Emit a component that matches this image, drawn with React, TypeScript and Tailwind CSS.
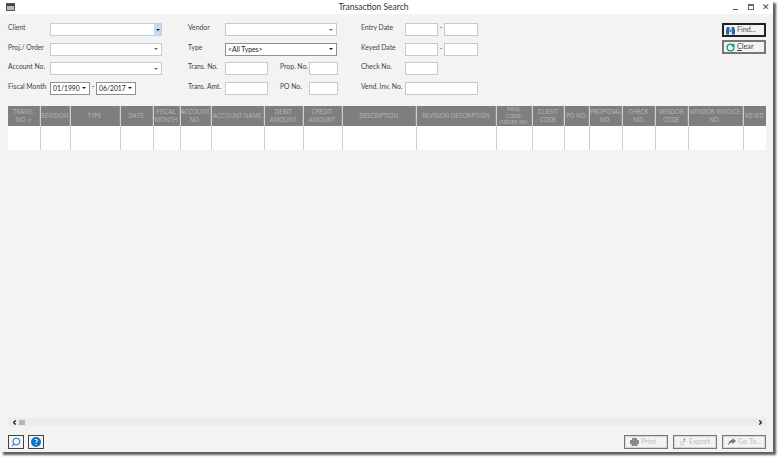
import { ChevronLeft, ChevronRight, RotateCw, Search } from "lucide-react";

const columns = [
  { label: "TRANS. NO. »", width: "w-[33px]" },
  { label: "REVISION", width: "w-[29.5px]" },
  { label: "TYPE", width: "w-[50px]" },
  { label: "DATE", width: "w-[33px]" },
  { label: "FISCAL MONTH", width: "w-[27px]" },
  { label: "ACCOUNT NO.", width: "w-[31px]" },
  { label: "ACCOUNT NAME", width: "w-[53.5px]" },
  { label: "DEBIT AMOUNT", width: "w-[38.5px]" },
  { label: "CREDIT AMOUNT", width: "w-[39px]" },
  { label: "DESCRIPTION", width: "w-[74.5px]" },
  { label: "REVISION DESCRIPTION", width: "w-[80px]" },
  { label: "PROJ.\nCODE/\nORDER NO.", width: "w-[36px]", tight: true },
  { label: "CLIENT CODE", width: "w-[32px]" },
  { label: "PO NO.", width: "w-[25px]" },
  { label: "PROPOSAL NO.", width: "w-[33px]" },
  { label: "CHECK NO.", width: "w-[33px]" },
  { label: "VENDOR CODE", width: "w-[32.5px]" },
  { label: "VENDOR INVOICE NO.", width: "w-[55px]" },
  { label: "KEYED", width: "w-[23px]" },
];

function Label({ children, className = "" }: { children: string; className?: string }) {
  return <span className={`shrink-0 whitespace-nowrap text-[6.8px] leading-[9px] text-[#444] ${className}`}>{children}</span>;
}

function Input({ className = "" }: { className?: string }) {
  return <div className={`h-[13px] shrink-0 border border-[#c9c9c9] bg-white ${className}`} />;
}

function Select({ value, className = "", dark = false }: { value?: string; className?: string; dark?: boolean }) {
  return (
    <div className={`flex h-[13px] shrink-0 items-center justify-between border bg-white pl-[2px] pr-[3px] ${dark ? "border-[#8f8f8f]" : "border-[#c9c9c9]"} ${className}`}>
      <span className="whitespace-nowrap text-[6.8px] leading-[10px] text-[#222]">{value}</span>
      <span className={`h-0 w-0 border-x-[2px] border-t-[2px] border-x-transparent ${dark ? "border-t-[#101060]" : "border-t-[#666]"}`} />
    </div>
  );
}

function Binoculars() {
  return (
    <svg width="9" height="9" viewBox="0 0 9 9" className="shrink-0">
      <path d="M1 1h2.500v2h-.3v5.500H0V4z M5.500 1H8l1 3v4.500H5.800V3h-.3z M3.800 3.500h1.400v2.500H3.800z" fill="#2c64a8" />
    </svg>
  );
}

function ToolButton({ children, className = "" }: { children: React.ReactNode; className?: string }) {
  return (
    <div className={`flex h-[14px] w-[44px] shrink-0 items-center gap-[2px] border-2 pl-[2px] text-[7.2px] leading-none ${className}`}>
      {children}
    </div>
  );
}

function DisabledButton({ label, icon }: { label: string; icon: React.ReactNode }) {
  return (
    <div className="flex h-[14px] w-[44px] items-center gap-[2px] border border-[#777] pl-[5px] text-[7.2px] leading-none text-[#bdbdbd] shadow-[inset_0_0_0_1px_#d5d5d5]">
      {icon}
      <span>{label}</span>
    </div>
  );
}

export default function App() {
  return (
    <div className="h-[459px] w-[781px] overflow-hidden bg-white font-['Lato',sans-serif]">
      <div className="flex h-[452px] w-[773px] flex-col bg-[#f3f3f3] shadow-[3px_3px_2px_#5f5f5f]">
        <div className="relative flex h-[14px] shrink-0 items-center justify-center bg-white pr-[26px]">
          <div className="absolute left-[6px] top-[3px] h-[8px] w-[9px] border border-[#555] bg-[#bbb] shadow-[inset_0_2px_0_#444]" />
          <span className="text-[8.5px] leading-none text-[#333]">Transaction Search</span>
          <span className="absolute left-[733px] top-[9px] h-px w-[5px] bg-[#555]" />
          <span className="absolute left-[748px] top-[4px] h-[6px] w-[6px] border border-[#666] border-t-2" />
          <span className="absolute left-[762px] top-[1px] text-[9px] leading-[12px] text-[#444]">✕</span>
        </div>

        <div className="flex h-[92px] shrink-0 pl-[8px] pr-[7px] pt-[9px]">
          <div className="flex w-[180px] shrink-0 flex-col gap-[6.67px]">
            <div className="flex h-[13px] items-start">
              <Label className="w-[42px]">Client</Label>
              <div className="flex h-[13px] w-[112px] items-center justify-between border border-[#bcd0e6] bg-white">
                <span />
                <span className="flex h-full w-[7px] items-center justify-center bg-[#c5d9f0]">
                  <span className="h-0 w-0 border-x-[2px] border-t-[2px] border-x-transparent border-t-[#224]" />
                </span>
              </div>
            </div>
            <div className="flex h-[13px] items-start">
              <Label className="w-[42px]">Proj./ Order</Label>
              <Select className="w-[112px]" />
            </div>
            <div className="flex h-[13px] items-start">
              <Label className="w-[42px]">Account No.</Label>
              <Select className="w-[112px]" />
            </div>
            <div className="flex h-[13px] items-start">
              <Label className="w-[42px]">Fiscal Month</Label>
              <Select dark value="01/1990" className="w-[40px]" />
              <span className="w-[6px] text-center text-[7px] leading-[8px] text-[#333]">-</span>
              <Select dark value="06/2017" className="w-[40px]" />
            </div>
          </div>

          <div className="flex w-[173px] shrink-0 flex-col gap-[6.67px]">
            <div className="flex h-[13px] items-start">
              <Label className="w-[37px]">Vendor</Label>
              <Select className="w-[112px]" />
            </div>
            <div className="flex h-[13px] items-start">
              <Label className="w-[37px]">Type</Label>
              <Select dark value="<All Types>" className="w-[112px]" />
            </div>
            <div className="flex h-[13px] items-start">
              <Label className="w-[37px]">Trans. No.</Label>
              <Input className="w-[43px]" />
              <Label className="w-[41px] pl-[12px]">Prop. No.</Label>
              <Input className="w-[29px]" />
            </div>
            <div className="flex h-[13px] items-start">
              <Label className="w-[37px]">Trans. Amt.</Label>
              <Input className="w-[43px]" />
              <Label className="w-[41px] pl-[12px]">PO No.</Label>
              <Input className="w-[29px]" />
            </div>
          </div>

          <div className="flex w-[361px] shrink-0 flex-col gap-[6.67px]">
            <div className="flex h-[13px] items-start">
              <Label className="w-[44px]">Entry Date</Label>
              <Input className="w-[33px]" />
              <span className="w-[6px] text-center text-[7px] leading-[8px] text-[#333]">-</span>
              <Input className="w-[34px]" />
            </div>
            <div className="flex h-[13px] items-start">
              <Label className="w-[44px]">Keyed Date</Label>
              <Input className="w-[33px]" />
              <span className="w-[6px] text-center text-[7px] leading-[10px] text-[#333]">-</span>
              <Input className="w-[34px]" />
            </div>
            <div className="flex h-[13px] items-start">
              <Label className="w-[44px]">Check No.</Label>
              <Input className="w-[33px]" />
            </div>
            <div className="flex h-[13px] items-start">
              <Label className="w-[44px]">Vend. Inv. No.</Label>
              <Input className="w-[73px]" />
            </div>
          </div>

          <div className="flex w-[44px] shrink-0 flex-col gap-[3px]">
            <ToolButton className="border-[#222] text-[#555]">
              <Binoculars />
              <span>Find...</span>
            </ToolButton>
            <ToolButton className="border-[#777] text-[#444]">
              <RotateCw size={9} strokeWidth={3.5} className="shrink-0 text-[#0f9a74]" />
              <span><span className="underline">C</span>lear</span>
            </ToolButton>
          </div>
        </div>

        <div className="mx-[8px] flex h-[44px] w-[758px] shrink-0 overflow-hidden font-['Open_Sans',sans-serif]">
          {columns.map((c) => (
            <div key={c.label} className={`flex shrink-0 flex-col border-r border-[#cfcfcf] last:border-r-0 ${c.width}`}>
              <div className={`flex h-[20px] shrink-0 items-center justify-center whitespace-pre-line border-r border-[#8f8f8f] bg-[#7e7e7e] text-center text-[#b9b9b9] ${c.tight ? "text-[5.6px] leading-[6.4px]" : "text-[6.2px] leading-[8px]"}`}>
                {c.label}
              </div>
              <div className="flex-1 bg-white" />
            </div>
          ))}
        </div>

        <div className="mx-[8px] mt-[268px] flex h-[8px] w-[758px] shrink-0 items-center justify-between bg-[#ebebeb] pl-[3px] pr-[2px]">
          <div className="flex items-center gap-[1px]">
            <ChevronLeft size={7} strokeWidth={4} className="text-[#111]" />
            <span className="h-[5px] w-[6px] bg-[#b5b5b5]" />
          </div>
          <ChevronRight size={7} strokeWidth={4} className="text-[#111]" />
        </div>

        <div className="mx-[8px] mt-[9px] flex h-[14px] w-[758px] shrink-0 justify-between">
          <div className="flex gap-[4px]">
            <div className="flex h-[14px] w-[16px] items-center justify-center border border-[#444]">
              <Search size={10} strokeWidth={2.5} className="-scale-x-100 text-[#2f7cc4]" />
            </div>
            <div className="flex h-[14px] w-[16px] items-center justify-center border border-[#444]">
              <span className="flex h-[10px] w-[10px] items-center justify-center rounded-full bg-[#1273c4] text-[8px] font-bold leading-none text-white">?</span>
            </div>
          </div>
          <div className="flex gap-[5px]">
            <DisabledButton
              label="Print"
              icon={
                <svg width="9" height="8" viewBox="0 0 9 8" className="shrink-0">
                  <path d="M2 0h5v2h2v4H7.500v2h-6V6H0V2h2z" fill="#8a8a8a" />
                </svg>
              }
            />
            <DisabledButton
              label="Export"
              icon={
                <svg width="8" height="8" viewBox="0 0 8 8" className="shrink-0">
                  <path d="M1 3h4v5H1z" fill="#dedede" />
                  <path d="M5 0l2 2H5.800v2h-1V2H4z" fill="#999" />
                </svg>
              }
            />
            <DisabledButton
              label="Go To..."
              icon={
                <svg width="8" height="8" viewBox="0 0 8 8" className="shrink-0">
                  <path d="M8 3L4.500 0v1.700C2 2 .3 4 0 7.500 1 5.500 2.500 4.500 4.500 4.500V6z" fill="#777" />
                </svg>
              }
            />
          </div>
        </div>
      </div>
    </div>
  );
}
